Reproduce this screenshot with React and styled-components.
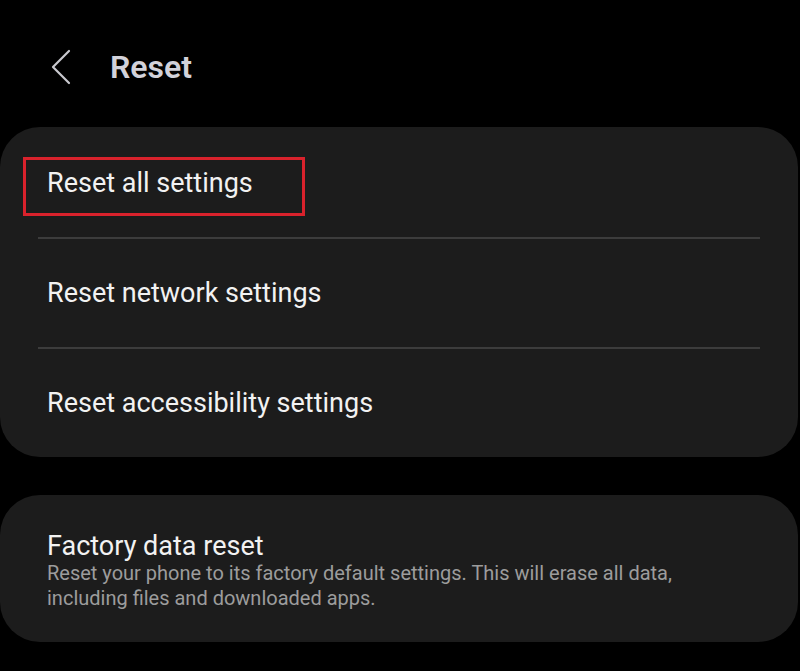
import React from 'react';
import styled, {createGlobalStyle} from 'styled-components';

const GlobalStyle = createGlobalStyle`
  html, body {
    margin: 0;
    padding: 0;
    background: #000;
  }
  body {
    font-family: Roboto, "Noto Sans", "Liberation Sans", sans-serif;
    -webkit-font-smoothing: antialiased;
  }
`;

const Page = styled.div`
  width: 800px;
  height: 671px;
  background: #000;
  overflow: hidden;
`;

const Header = styled.div`
  display: flex;
  align-items: center;
  height: 127px;
  box-sizing: border-box;
  padding: 49px 0 42px 50px;
  gap: 38px;
`;

const BackButton = styled.button`
  background: none;
  border: 0;
  padding: 0;
  display: flex;
  width: 22px;
  height: 36px;
`;

const Title = styled.h1`
  margin: 0;
  font-size: 32px;
  line-height: 36px;
  font-weight: 600;
  color: #d2d2da;
`;

const Card = styled.div`
  position: relative;
  margin: 0 2px ${p => p.gap || 0}px 0;
  background: #1c1c1c;
  border-radius: 40px;
  padding: ${p => p.pad};
`;

const Row = styled.div`
  position: relative;
  height: 108px;
  display: flex;
  align-items: center;
  padding-left: 47px;
  font-size: 27px;
  color: #f2f2f2;
`;

const Divider = styled.div`
  height: 2px;
  margin: 0 38px;
  background: #3c3c3c;
`;

const Highlight = styled.div`
  position: absolute;
  left: 23px;
  top: 28px;
  width: 282px;
  height: 59px;
  box-sizing: border-box;
  border: 3px solid #d9222c;
  pointer-events: none;
`;

const ItemTitle = styled.div`
  font-size: 27px;
  line-height: 29px;
  color: #f2f2f2;
`;

const ItemDesc = styled.div`
  font-size: 20px;
  line-height: 25px;
  color: #9c9c9c;
`;

const rows = ['Reset all settings', 'Reset network settings', 'Reset accessibility settings'];

export default function App() {
  return (
    <Page>
      <GlobalStyle />
      <Header>
        <BackButton aria-label="Back">
          <svg width="22" height="36" viewBox="0 0 22 36" fill="none">
            <path d="M19 2 L3 18 L19 34" stroke="#c9c9cf" strokeWidth="2.2" strokeLinecap="round" strokeLinejoin="round" />
          </svg>
        </BackButton>
        <Title>Reset</Title>
      </Header>
      <Card pad="2px 0 0" gap={38}>
        {rows.map((label, i) => (
          <React.Fragment key={label}>
            {i > 0 && <Divider />}
            <Row>
              {i === 0 && <Highlight />}
              {label}
            </Row>
          </React.Fragment>
        ))}
      </Card>
      <Card pad="37px 40px 31px 47px">
        <ItemTitle>Factory data reset</ItemTitle>
        <ItemDesc>
          Reset your phone to its factory default settings. This will erase all data,
          <br />
          including files and downloaded apps.
        </ItemDesc>
      </Card>
    </Page>
  );
}
